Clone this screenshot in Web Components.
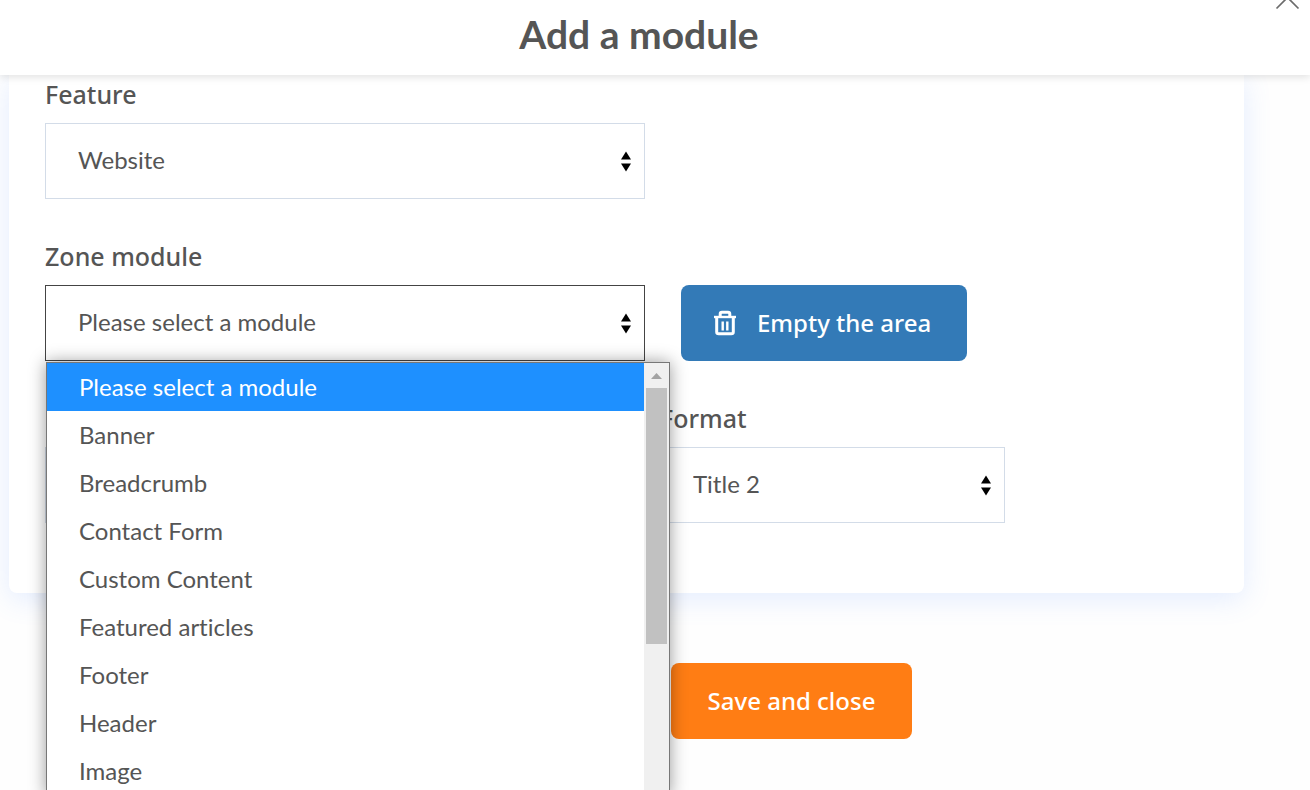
<!DOCTYPE html>
<html lang="en">
<head>
<meta charset="utf-8">
<title>Add a module</title>
<style>
  html { overflow: hidden; }
  body { margin: 0; min-height: 100vh; background: #fefefe; color: #555; font: 24px/28px Lato, "Noto Sans", sans-serif; font-variant-ligatures: none; }
</style>
</head>
<body>
<module-dialog></module-dialog>
<script>
const define = (name, html, setup) => customElements.define(name, class extends HTMLElement {
  constructor() {
    super();
    this.attachShadow({ mode: "open" }).innerHTML = html;
  }
  connectedCallback() { if (setup) setup(this, this.shadowRoot); }
});

define("dialog-header", `
  <style>
    :host { display: flex; justify-content: center; position: relative; z-index: 1; box-sizing: border-box; height: 75px; padding: 10px 32px 0 0; background: #fff; box-shadow: 0 2px 8px rgba(0,0,0,.12); }
    h1 { margin: 0; font: 700 39px/48px Lato, "Noto Sans", sans-serif; }
    button { position: absolute; top: -15px; right: 10px; width: 25px; height: 25px; padding: 0; border: 0; background: none; }
    svg { display: block; }
  </style>
  <h1><slot></slot></h1>
  <button type="button" aria-label="Close"><svg width="25" height="25" viewBox="0 0 25 25"><path d="M1.5 1.5 23.5 23.5M23.5 1.5 1.5 23.5" stroke="#6b6b6b" stroke-width="1.7"/></svg></button>
`);

define("select-field", `
  <style>
    :host { display: block; }
    label { display: block; margin-bottom: 15px; font: 500 25px/27px "Noto Sans", sans-serif; }
    .box { position: relative; }
    select { display: block; appearance: none; box-sizing: border-box; width: 100%; height: 76px; padding: 0 48px 2px 32px; border: 1px solid #d3dce8; border-radius: 0; background: #fff; color: inherit; font: inherit; }
    :host([open]) select { border-color: #444; }
    svg { position: absolute; right: 13px; top: 28px; pointer-events: none; }
  </style>
  <label for="s"></label>
  <div class="box">
    <select id="s"><option></option></select>
    <svg width="12" height="21" viewBox="0 0 12 21"><path d="M6 .5 11 8.500H1ZM6 20.500 11 12.500H1Z" fill="#000"/></svg>
    <slot></slot>
  </div>
`, (host, root) => {
  root.querySelector("label").textContent = host.getAttribute("label");
  root.querySelector("option").textContent = host.getAttribute("value");
});

define("text-field", `
  <style>
    :host { display: block; }
    input { display: block; box-sizing: border-box; width: 100%; height: 76px; padding: 0 32px; border: 1px solid #d3dce8; background: #fff; color: inherit; font: inherit; }
  </style>
  <input type="text">
`, (host, root) => {
  root.querySelector("input").setAttribute("aria-label", host.getAttribute("label"));
});

define("option-list", `
  <style>
    :host { display: flex; position: absolute; z-index: 2; top: 77px; left: 1px; right: -25px; border: 1px solid #777; background: #fff; box-shadow: 0 0 16px rgba(0,0,0,.4); }
    ul { flex: 1; margin: 0; padding: 0; list-style: none; }
    .bar { display: flex; flex-direction: column; align-items: center; width: 25px; background: #f0f0f0; }
    .bar svg { flex: none; }
    .thumb { width: 21px; height: 256px; background: #c1c1c1; }
    ::slotted(option-item) { height: 48px; }
  </style>
  <ul role="listbox" aria-label="Zone module"><slot></slot></ul>
  <div class="bar">
    <svg width="25" height="25" viewBox="0 0 25 25"><path d="M7 16 12.5 10 18 16Z" fill="#a3a3a3"/></svg>
    <div class="thumb"></div>
  </div>
`);

define("option-item", `
  <style>
    :host { display: flex; align-items: center; padding: 0 32px 1px; box-sizing: border-box; }
    :host([selected]) { background: #1e90ff; color: #fff; }
  </style>
  <slot></slot>
`, host => host.setAttribute("role", "option"));

define("action-button", `
  <style>
    :host { display: block; }
    button { display: flex; align-items: center; justify-content: center; gap: 20px; min-width: 241px; height: 76px; padding: 0 32px; border: 0; border-radius: 8px; background: #ff7d14; color: #fff; font: 500 24px/28px "Noto Sans", sans-serif; white-space: nowrap; }
    :host([tone="blue"]) button { justify-content: flex-start; min-width: 286px; background: #337ab7; }
  </style>
  <button type="button"><slot name="icon"></slot><slot></slot></button>
`);

define("module-dialog", `
  <style>
    :host { display: block; }
    .card { margin: 0 66px 0 9px; padding: 6px 36px 70px; background: #fff; border-radius: 0 0 8px 8px; box-shadow: 0 6px 28px rgba(90,140,255,.16); }
    form { display: flex; flex-direction: column; gap: 44px; }
    .row { display: grid; grid-template-columns: 600px 1fr; column-gap: 36px; align-items: end; }
    .pair { display: grid; grid-template-columns: 600px 345px; column-gap: 15px; align-items: end; }
    .actions { display: grid; grid-template-columns: 1fr 1fr; column-gap: 32px; padding: 70px 0 51px; }
    .actions action-button { grid-column: 2; }
    svg { display: block; }
  </style>
  <dialog-header>Add a module</dialog-header>
  <main>
    <section class="card">
      <form>
        <div class="row"><select-field label="Feature" value="Website"></select-field></div>
        <div class="row">
          <select-field open label="Zone module" value="Please select a module">
            <option-list>
              <option-item selected>Please select a module</option-item>
              <option-item>Banner</option-item>
              <option-item>Breadcrumb</option-item>
              <option-item>Contact Form</option-item>
              <option-item>Custom Content</option-item>
              <option-item>Featured articles</option-item>
              <option-item>Footer</option-item>
              <option-item>Header</option-item>
              <option-item>Image</option-item>
            </option-list>
          </select-field>
          <action-button tone="blue">
            <svg slot="icon" width="24" height="26" viewBox="0 0 24 26" fill="none" stroke="#fff"><path d="M1 7H23" stroke-width="2.4"/><path d="M7.2 6.5V4Q7.2 2.2 9 2.2H15Q16.8 2.2 16.8 4V6.5" stroke-width="3"/><path d="M3.7 7V22Q3.7 23.8 5.7 23.8H18.3Q20.3 23.8 20.3 22V7" stroke-width="3"/><path d="M9.7 11.5V20.5M14.3 11.5V20.5" stroke-width="2.4"/></svg>
            Empty the area
          </action-button>
        </div>
        <div class="pair">
          <text-field label="Title"></text-field>
          <select-field label="Format" value="Title 2"></select-field>
        </div>
      </form>
    </section>
    <div class="actions"><action-button>Save and close</action-button></div>
  </main>
`);
</script>
</body>
</html>
